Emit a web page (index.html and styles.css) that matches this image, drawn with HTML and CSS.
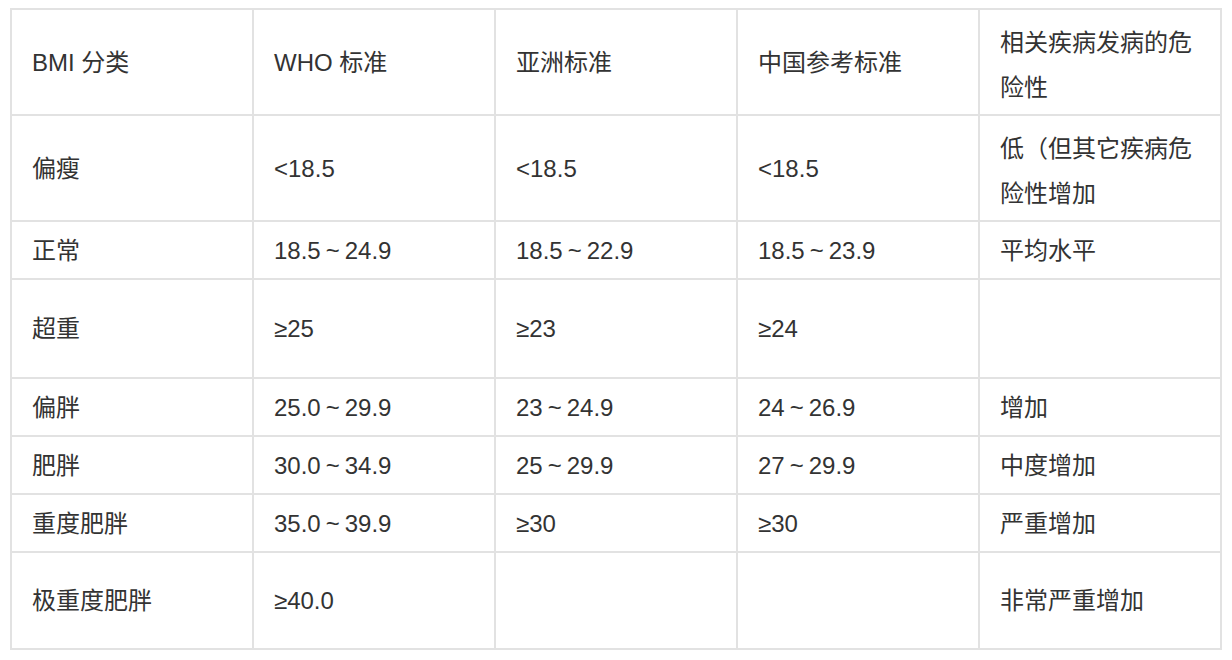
FILE: index.html
```html
<!DOCTYPE html>
<html lang="zh-CN">
<head>
<meta charset="utf-8">
<title>BMI 分类</title>
<link rel="stylesheet" href="styles.css">
</head>
<body>
<div class="bmi-table" role="table">
  <div class="cell">BMI 分类</div>
  <div class="cell">WHO 标准</div>
  <div class="cell">亚洲标准</div>
  <div class="cell">中国参考标准</div>
  <div class="cell multi">相关疾病发病的危险性</div>

  <div class="cell">偏瘦</div>
  <div class="cell">&lt;18.5</div>
  <div class="cell">&lt;18.5</div>
  <div class="cell">&lt;18.5</div>
  <div class="cell multi">低（但其它疾病危险性增加</div>

  <div class="cell">正常</div>
  <div class="cell">18.5<span class="tilde">~</span>24.9</div>
  <div class="cell">18.5<span class="tilde">~</span>22.9</div>
  <div class="cell">18.5<span class="tilde">~</span>23.9</div>
  <div class="cell">平均水平</div>

  <div class="cell">超重</div>
  <div class="cell">≥25</div>
  <div class="cell">≥23</div>
  <div class="cell">≥24</div>
  <div class="cell"></div>

  <div class="cell">偏胖</div>
  <div class="cell">25.0<span class="tilde">~</span>29.9</div>
  <div class="cell">23<span class="tilde">~</span>24.9</div>
  <div class="cell">24<span class="tilde">~</span>26.9</div>
  <div class="cell">增加</div>

  <div class="cell">肥胖</div>
  <div class="cell">30.0<span class="tilde">~</span>34.9</div>
  <div class="cell">25<span class="tilde">~</span>29.9</div>
  <div class="cell">27<span class="tilde">~</span>29.9</div>
  <div class="cell">中度增加</div>

  <div class="cell">重度肥胖</div>
  <div class="cell">35.0<span class="tilde">~</span>39.9</div>
  <div class="cell">≥30</div>
  <div class="cell">≥30</div>
  <div class="cell">严重增加</div>

  <div class="cell">极重度肥胖</div>
  <div class="cell">≥40.0</div>
  <div class="cell"></div>
  <div class="cell"></div>
  <div class="cell">非常严重增加</div>
</div>
</body>
</html>
```

FILE: styles.css
```css
html, body {
  background: #ffffff;
}
body {
  margin: 8px 0 0 10px;
  font-family: "Liberation Sans", "Noto Sans CJK SC", sans-serif;
  font-size: 24px;
  color: #333333;
}
.bmi-table {
  display: grid;
  grid-template-columns: repeat(5, 242px);
  grid-template-rows: 106px 106px 58px 99px 58px 58px 58px 97px;
  width: max-content;
  border-top: 2px solid #e2e2e2;
  border-left: 2px solid #e2e2e2;
}
.cell {
  box-sizing: border-box;
  display: flex;
  align-items: center;
  padding: 0 20px;
  border-right: 2px solid #e2e2e2;
  border-bottom: 2px solid #e2e2e2;
  line-height: 45px;
}
.cell.multi {
  padding-top: 5px;
}
.tilde {
  margin: 0 5px;
}
```
